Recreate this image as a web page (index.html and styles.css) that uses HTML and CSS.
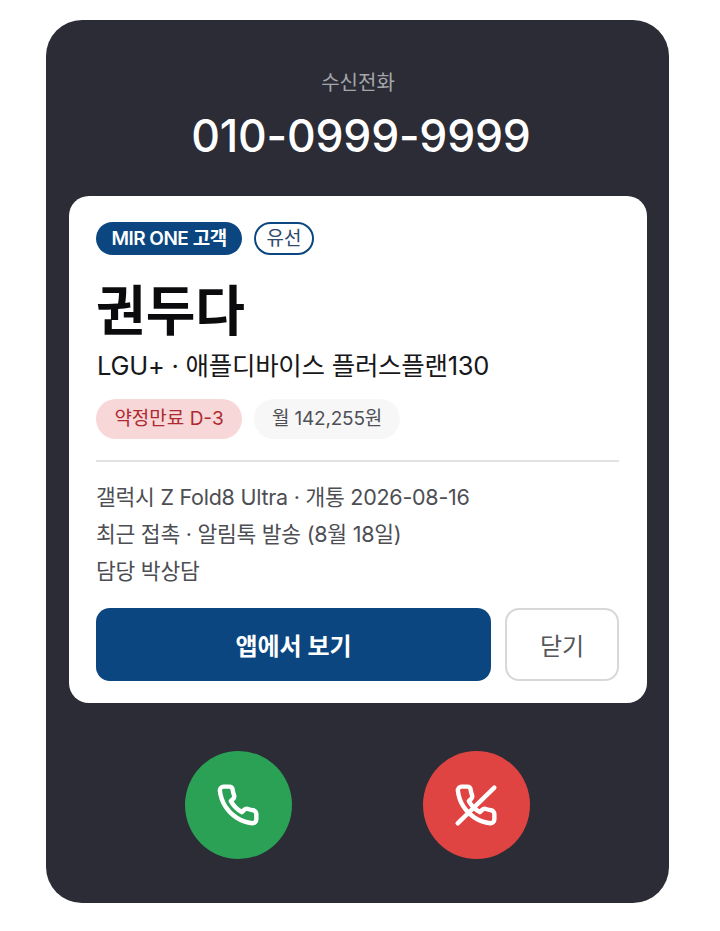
FILE: index.html
```html
<!DOCTYPE html>
<html lang="ko">
<head>
    <meta charset="UTF-8">
    <meta name="viewport" content="width=device-width, initial-scale=1.0">
    <title>수신전화</title>
    <link rel="stylesheet" href="styles.css">
</head>
<body>
    <div class="phone">
        <div class="caller">
            <p class="caller-label">수신전화</p>
            <p class="caller-number">010-0999-9999</p>
        </div>

        <div class="card">
            <div class="chip-row">
                <span class="chip chip-brand">MIR ONE 고객</span>
                <span class="chip chip-line">유선</span>
            </div>
            <h1 class="customer-name">권두다</h1>
            <p class="plan">LGU+ · 애플디바이스 플러스플랜130</p>
            <div class="tag-row">
                <span class="tag tag-alert">약정만료 D-3</span>
                <span class="tag tag-fee">월 142,255원</span>
            </div>
            <div class="details">
                <p>갤럭시 Z Fold8 Ultra · 개통 2026-08-16</p>
                <p>최근 접촉 · 알림톡 발송 (8월 18일)</p>
                <p>담당 박상담</p>
            </div>
            <div class="actions">
                <button class="btn btn-primary" type="button">앱에서 보기</button>
                <button class="btn btn-close" type="button">닫기</button>
            </div>
        </div>

        <div class="call-buttons">
            <button class="call-btn call-accept" type="button" aria-label="수락">
                <svg viewBox="0 0 24 24" width="44" height="44">
                    <path d="M22 16.92v3a2 2 0 0 1-2.18 2 19.79 19.79 0 0 1-8.63-3.07 19.5 19.5 0 0 1-6-6 19.79 19.79 0 0 1-3.07-8.67A2 2 0 0 1 4.11 2h3a2 2 0 0 1 2 1.72 12.84 12.84 0 0 0 .7 2.81 2 2 0 0 1-.45 2.11L8.09 9.91a16 16 0 0 0 6 6l1.27-1.27a2 2 0 0 1 2.11-.45 12.84 12.84 0 0 0 2.81.7A2 2 0 0 1 22 16.92z"/>
                </svg>
            </button>
            <button class="call-btn call-decline" type="button" aria-label="거절">
                <svg viewBox="0 0 24 24" width="44" height="44">
                    <path d="M22 16.92v3a2 2 0 0 1-2.18 2 19.79 19.79 0 0 1-8.63-3.07 19.5 19.5 0 0 1-6-6 19.79 19.79 0 0 1-3.07-8.67A2 2 0 0 1 4.11 2h3a2 2 0 0 1 2 1.72 12.84 12.84 0 0 0 .7 2.81 2 2 0 0 1-.45 2.11L8.09 9.91a16 16 0 0 0 6 6l1.27-1.27a2 2 0 0 1 2.11-.45 12.84 12.84 0 0 0 2.81.7A2 2 0 0 1 22 16.92z"/>
                    <path d="M2 22 22 2.5"/>
                </svg>
            </button>
        </div>
    </div>
</body>
</html>
```

FILE: styles.css
```css
body {
    font-family: Inter, 'Noto Sans CJK KR', sans-serif;
    margin: 0;
    padding: 20px 51px 28px 46px;
    background-color: #ffffff;
}
p, h1 {
    margin: 0;
}
.phone {
    height: 883px;
    box-sizing: border-box;
    padding: 0 22px 0 23px;
    border-radius: 36px;
    background-color: #2b2c36;
}
.caller {
    height: 176px;
    padding-top: 50px;
    box-sizing: border-box;
    text-align: center;
}
.caller-label {
    font-size: 20px;
    line-height: 26px;
    color: #a5a6aa;
}
.caller-number {
    margin-top: 12px;
    padding-left: 6px;
    font-size: 44.5px;
    line-height: 56px;
    font-weight: 500;
    letter-spacing: -0.2px;
    color: #ffffff;
}
.card {
    height: 507px;
    box-sizing: border-box;
    padding: 26px 28px 22px 27px;
    border-radius: 20px;
    background-color: #ffffff;
}
.chip-row {
    display: flex;
    gap: 12px;
    height: 33px;
    align-items: center;
}
.chip {
    box-sizing: border-box;
    height: 33px;
    border-radius: 17px;
    font-size: 19px;
    line-height: 34px;
}
.chip-brand {
    width: 146px;
    text-align: center;
    font-weight: 600;
    letter-spacing: -0.5px;
    color: #ffffff;
    background-color: #0b4680;
}
.chip-line {
    width: 60px;
    line-height: 30px;
    text-align: center;
    color: #2f4a6b;
    border: 2px solid #0b4680;
}
.customer-name {
    margin-top: 22px;
    font-size: 54px;
    line-height: 70px;
    font-weight: 600;
    color: #0b0b0d;
}
.plan {
    margin-top: 1px;
    padding-left: 1px;
    font-size: 25.5px;
    line-height: 36px;
    letter-spacing: -0.25px;
    color: #17171a;
}
.tag-row {
    display: flex;
    gap: 12px;
    margin-top: 15px;
}
.tag {
    height: 40px;
    border-radius: 20px;
    font-size: 19px;
    line-height: 40px;
    text-align: center;
}
.tag-alert {
    width: 146px;
    color: #ad2a30;
    background-color: #f8d7d8;
}
.tag-fee {
    width: 146px;
    letter-spacing: -0.2px;
    color: #4f5055;
    background-color: #f7f7f8;
}
.details {
    margin-top: 21px;
    padding-top: 17px;
    border-top: 2px solid #e2e2e4;
    font-size: 21.5px;
    line-height: 37px;
    letter-spacing: -0.25px;
    color: #4d4e53;
}
.actions {
    display: flex;
    gap: 14px;
    margin-top: 18px;
}
.btn {
    height: 73px;
    border-radius: 14px;
    font-family: inherit;
    font-size: 24px;
    cursor: pointer;
}
.btn-primary {
    flex: 1;
    border: none;
    font-weight: 700;
    color: #ffffff;
    background-color: #0b4680;
}
.btn-close {
    width: 114px;
    border: 2px solid #d8d8da;
    color: #55565b;
    background-color: #ffffff;
}
.call-buttons {
    display: flex;
    justify-content: center;
    gap: 131px;
    margin: 0 2px 0 0;
    padding-top: 48px;
}
.call-btn {
    display: flex;
    align-items: center;
    justify-content: center;
    width: 107px;
    height: 108px;
    padding: 0;
    border: none;
    border-radius: 50%;
    cursor: pointer;
}
.call-btn svg {
    fill: none;
    stroke: #ffffff;
    stroke-width: 2.4;
    stroke-linecap: round;
    stroke-linejoin: round;
}
.call-accept {
    background-color: #2ba155;
}
.call-decline {
    background-color: #e04442;
}
```
